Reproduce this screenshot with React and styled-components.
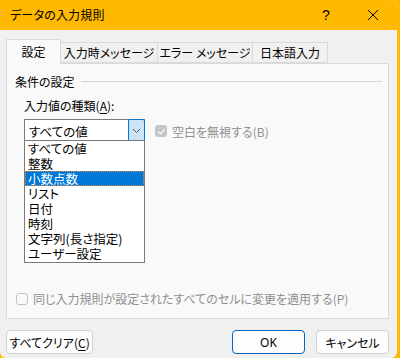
import React from "react";
import styled, { createGlobalStyle } from "styled-components";

const GlobalStyle = createGlobalStyle`
  html, body {
    margin: 0;
    padding: 0;
    background: #ffb900;
  }
  body {
    font-family: "Noto Sans CJK JP", "Noto Sans", sans-serif;
    font-feature-settings: "palt";
    font-size: 12px;
    color: #000;
  }
`;

const Window = styled.div`
  width: 397px;
  height: 358px;
  background: #f0f0f0;
  border-top-right-radius: 8px;
  border-bottom-left-radius: 6px;
  border-bottom-right-radius: 6px;
  overflow: hidden;
  display: flex;
  flex-direction: column;
`;

const TitleBar = styled.div`
  height: 30px;
  background: #ffb900;
  display: flex;
  align-items: center;
  padding-left: 10px;
  font-size: 12px;
  letter-spacing: 0.2px;
`;

const Title = styled.div`
  flex: 1;
  padding-bottom: 1px;
`;

const TitleButton = styled.div`
  width: ${(p) => p.w}px;
  height: 30px;
  display: flex;
  align-items: center;
  justify-content: center;
  font-family: "Liberation Sans", sans-serif;
  font-size: 14px;
`;

const Tabs = styled.div`
  display: flex;
  align-items: flex-end;
  padding: 8px 0 0 6px;
  height: 25px;
  position: relative;
  z-index: 1;
`;

const Tab = styled.div`
  height: ${(p) => (p.active ? 25 : 21)}px;
  width: ${(p) => p.w}px;
  box-sizing: border-box;
  border: 1px solid #dadada;
  border-bottom: ${(p) => (p.active ? "none" : "1px solid #dadada")};
  border-left: ${(p) => (p.active ? "1px solid #dadada" : "none")};
  background: ${(p) => (p.active ? "#f9f9f9" : "#f0f0f0")};
  display: flex;
  align-items: center;
  justify-content: center;
  font-size: 12px;
  margin-bottom: ${(p) => (p.active ? -1 : 0)}px;
  padding-bottom: ${(p) => (p.active ? 2 : 0)}px;
`;

const Panel = styled.div`
  margin: 0 8px 0 6px;
  height: 256px;
  box-sizing: border-box;
  border: 1px solid #dadada;
  background: #f9f9f9;
  position: relative;
  padding: 9px 6px 0 8px;
  display: flex;
  flex-direction: column;
`;

const GroupHeader = styled.div`
  display: flex;
  align-items: center;
  gap: 6px;
  font-size: 12px;
  height: 16px;
`;

const GroupLine = styled.div`
  flex: 1;
  height: 1px;
  background: #d5d5d5;
`;

const FieldLabel = styled.div`
  margin: 8px 0 0 9px;
  font-size: 12px;
  height: 16px;
  display: flex;
  align-items: center;
`;

const Key = styled.span`
  text-decoration: underline;
  text-underline-offset: 2px;
`;

const ComboRow = styled.div`
  display: flex;
  align-items: center;
  margin: 6px 0 0 9px;
  gap: 10px;
`;

const Combo = styled.div`
  width: 121px;
  height: 24px;
  box-sizing: border-box;
  border: 1px solid #7a7a7a;
  background: #fff;
  display: flex;
  align-items: center;
  position: relative;
`;

const ComboText = styled.div`
  flex: 1;
  padding-left: 4px;
  font-size: 12.5px;
`;

const ComboButton = styled.div`
  width: 17px;
  height: 24px;
  margin: -1px -1px -1px 0;
  box-sizing: border-box;
  border: 1px solid #0078d7;
  border-radius: 2px;
  background: #cce4f7;
  display: flex;
  align-items: center;
  justify-content: center;
`;

const Check = styled.div`
  width: 12px;
  height: 12px;
  box-sizing: border-box;
  border-radius: 3px;
  background: ${(p) => (p.checked ? "#c6c6c6" : "#f9f9f9")};
  border: ${(p) => (p.checked ? "none" : "1px solid #c2c2c2")};
  display: flex;
  align-items: center;
  justify-content: center;
`;

const CheckLabel = styled.label`
  display: flex;
  align-items: center;
  gap: 5px;
  color: #8f8f8f;
  font-size: 12px;
`;

const DropList = styled.div`
  position: absolute;
  left: 17px;
  top: 76px;
  width: 121px;
  box-sizing: border-box;
  border: 1px solid #7a7a7a;
  background: #fff;
  padding: 0 0 1px;
  z-index: 2;
`;

const DropItem = styled.div`
  height: 15px;
  line-height: 13px;
  box-sizing: border-box;
  padding-left: 2px;
  font-size: 12.5px;
  background: ${(p) => (p.selected ? "#0078d7" : "transparent")};
  color: ${(p) => (p.selected ? "#fff" : "#000")};
  border: 1px dotted ${(p) => (p.selected ? "#e7893a" : "transparent")};
`;

const Spacer = styled.div`
  flex: 1;
`;

const BottomCheck = styled(CheckLabel)`
  margin: 0 0 11px 1px;
`;

const Footer = styled.div`
  display: flex;
  align-items: center;
  padding: 11px 8px 0 6px;
  gap: 11px;
`;

const Button = styled.div`
  width: ${(p) => p.w}px;
  height: 24px;
  box-sizing: border-box;
  border: 1px solid ${(p) => (p.primary ? "#0067c0" : "#d0d0d0")};
  border-radius: 4px;
  background: #fdfdfd;
  display: flex;
  align-items: center;
  justify-content: center;
  font-size: 12px;
  font-family: ${(p) => (p.latin ? '"Noto Sans", sans-serif' : "inherit")};
`;

const items = [
  "すべての値",
  "整数",
  "小数点数",
  "リスト",
  "日付",
  "時刻",
  "文字列(長さ指定)",
  "ユーザー設定",
];

function CheckMark() {
  return (
    <svg width="9" height="9" viewBox="0 0 10 10">
      <path d="M1.5 5.2 L4 7.6 L8.6 2.6" fill="none" stroke="#fff" strokeWidth="1.3" />
    </svg>
  );
}

export default function App() {
  return (
    <>
      <GlobalStyle />
      <Window>
        <TitleBar>
          <Title>データの入力規則</Title>
          <TitleButton w={46}>?</TitleButton>
          <TitleButton w={48}>
            <svg width="12" height="12" viewBox="0 0 12 12">
              <path d="M1 1 L11 11 M11 1 L1 11" stroke="#000" strokeWidth="1" />
            </svg>
          </TitleButton>
        </TitleBar>
        <Tabs>
          <Tab active w={55}>設定</Tab>
          <Tab w={97}>入力時メッセージ</Tab>
          <Tab w={95}>エラー メッセージ</Tab>
          <Tab w={75}>日本語入力</Tab>
        </Tabs>
        <Panel>
          <GroupHeader>
            <span>条件の設定</span>
            <GroupLine />
          </GroupHeader>
          <FieldLabel>
            入力値の種類(<Key>A</Key>):
          </FieldLabel>
          <ComboRow>
            <Combo>
              <ComboText>すべての値</ComboText>
              <ComboButton>
                <svg width="9" height="6" viewBox="0 0 9 6">
                  <path d="M1 1 L4.5 4.5 L8 1" fill="none" stroke="#555" strokeWidth="1" />
                </svg>
              </ComboButton>
            </Combo>
            <CheckLabel>
              <Check checked>
                <CheckMark />
              </Check>
              空白を無視する(B)
            </CheckLabel>
          </ComboRow>
          <DropList>
            {items.map((it) => (
              <DropItem key={it} selected={it === "小数点数"}>
                {it}
              </DropItem>
            ))}
          </DropList>
          <Spacer />
          <BottomCheck>
            <Check />
            同じ入力規則が設定されたすべてのセルに変更を適用する(P)
          </BottomCheck>
        </Panel>
        <Footer>
          <Button w={87}>
            すべてクリア(<Key>C</Key>)
          </Button>
          <Spacer />
          <Button w={73} primary latin>
            OK
          </Button>
          <Button w={73}>キャンセル</Button>
        </Footer>
      </Window>
    </>
  );
}
